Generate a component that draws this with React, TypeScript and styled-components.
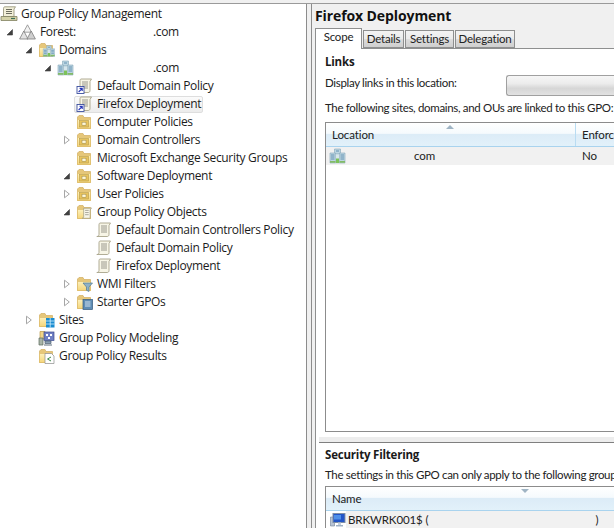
import React from "react";
import styled, { createGlobalStyle } from "styled-components";

const Global = createGlobalStyle`
  html, body { margin: 0; padding: 0; background: #f0f0f0; overflow: hidden; }
  body { font-family: "Open Sans", "Noto Sans", sans-serif; font-size: 12px; color: #1e1e1e; }
`;

const Page = styled.div`
  width: 614px; height: 528px; overflow: hidden; display: flex; flex-direction: column; background: #f0f0f0;
`;
const TopEdge = styled.div`height: 4px; flex: none; background: #f0f0f0; border-bottom: 1px solid #9a9a9a; box-sizing: border-box;`;
const Panes = styled.div`flex: 1; min-height: 0; display: flex;`;
const TreePane = styled.div`
  width: 306px; flex: none; background: #fff; border-right: 1px solid #8c8c8c; padding-top: 1px;
`;
const Gutter = styled.div`width: 4px; flex: none; background: #f0f0f0;`;
const DetailPane = styled.div`
  flex: 1; min-width: 0; background: #f0f0f0; border-left: 1px solid #8c8c8c; display: flex; flex-direction: column; padding-left: 3px;
`;
const Row = styled.div<{ $level: number }>`
  height: 18px; display: flex; align-items: center; white-space: nowrap;
  padding-left: ${(p) => (p.$level === 0 ? 0 : p.$level * 19 - 17)}px;
`;
const Expander = styled.span`width: 17px; height: 18px; flex: none; display: flex; align-items: center; padding-left: 4px; box-sizing: border-box;`;
const Item = styled.span<{ $selected?: boolean }>`
  display: flex; align-items: center; height: 17px; box-sizing: border-box; margin-left: -2px; padding: 0 1px 0 2px;
  border: 1px solid ${(p) => (p.$selected ? "#dedede" : "transparent")};
  border-radius: 2px;
  background: ${(p) => (p.$selected ? "linear-gradient(#fbfbfb, #ececec)" : "none")};
`;
const IconSlot = styled.span`width: 17px; height: 16px; flex: none; display: block; margin-left: -1px;`;
const Label = styled.span`margin-left: 4px; font-size: 12px; letter-spacing: -0.33px; color: #1c1c1c; line-height: 16px;`;
const Gap = styled.span<{ $w: number }>`display: inline-block; width: ${(p) => p.$w}px;`;

const Title = styled.div`
  height: 23px; flex: none; font-weight: 700; font-size: 14px; line-height: 24px; color: #111; letter-spacing: -0.1px;
`;
const Tabs = styled.div`display: flex; height: 21px; flex: none; align-items: flex-end; position: relative; z-index: 1;`;
const Tab = styled.div<{ $active?: boolean; $w: number }>`
  width: ${(p) => p.$w}px; height: ${(p) => (p.$active ? 21 : 18)}px; box-sizing: border-box; margin-right: 1px; text-align: center;
  border: 1px solid #8e8f8f; border-bottom: ${(p) => (p.$active ? "none" : "1px solid #8e8f8f")};
  background: ${(p) => (p.$active ? "#fff" : "linear-gradient(#f3f3f3, #ebebeb 48%, #dcdcdc 52%, #cfcfcf)")};
  font-family: "Lato", sans-serif; font-size: 11.5px; letter-spacing: -0.2px; line-height: 16px; color: #222; margin-bottom: ${(p) => (p.$active ? -1 : 0)}px;
`;
const TabBody = styled.div`
  flex: 1; min-height: 0; background: #fff; border-left: 1px solid #8e8f8f; border-top: 1px solid #8e8f8f; display: flex; flex-direction: column; overflow: hidden;
`;
const Section = styled.section<{ $h: number }>`
  height: ${(p) => p.$h}px; flex: none; padding-left: 9px; box-sizing: border-box; overflow: hidden;
`;
const Heading = styled.div<{ $top: number }>`
  margin-top: ${(p) => p.$top}px; font-weight: 700; font-size: 11.5px; letter-spacing: -0.2px; color: #1a1a1a; line-height: 16px;
`;
const Para = styled.div<{ $top?: number }>`
  margin-top: ${(p) => p.$top ?? 0}px; font-family: "Lato", sans-serif; font-size: 11.5px; letter-spacing: -0.33px; color: #222; line-height: 16px; white-space: nowrap;
`;
const LocationRow = styled.div`display: flex; align-items: flex-start; height: 21px; margin-top: 5px;`;
const Combo = styled.div`
  margin-left: auto; width: 108px; flex: none; height: 21px; border: 1px solid #a0a0a0; border-right: none; border-radius: 3px 0 0 3px;
  background: linear-gradient(#f6f6f6, #ececec 40%, #d6d6d6 65%, #e2e2e2); box-sizing: border-box;
`;
const Grid = styled.div<{ $h: number; $top: number }>`
  margin-top: ${(p) => p.$top}px; height: ${(p) => p.$h}px; border: 1px solid #8c8c8c; border-right: none; overflow: hidden; box-sizing: border-box; background: #fff;
`;
const HeadRow = styled.div`
  height: 24px; position: relative; display: flex; box-sizing: border-box; border-bottom: 1px solid #a9d3ee;
  background: linear-gradient(#ffffff, #f5fafd 45%, #dcecf7 50%, #e2f1fa);
`;
const HeadCell = styled.div<{ $w?: number }>`
  width: ${(p) => (p.$w ? `${p.$w}px` : "auto")}; flex: ${(p) => (p.$w ? "none" : 1)}; box-sizing: border-box; padding: 4px 0 0 6px; white-space: nowrap;
  font-family: "Lato", sans-serif; font-size: 11.5px; letter-spacing: -0.1px; line-height: 16px; color: #222; border-right: ${(p) => (p.$w ? "1px solid #b9dcf2" : "none")};
`;
const SortMark = styled.svg<{ $left: number }>`position: absolute; left: ${(p) => p.$left}px; top: 2px; display: block;`;
const DataRow = styled.div<{ $iconOutside?: boolean }>`
  height: 18px; display: flex; align-items: center; white-space: nowrap;
  background: ${(p) => (p.$iconOutside ? "linear-gradient(to right, #fff 20px, #f1f1f1 20px)" : "#f1f1f1")};
  font-family: "Lato", sans-serif; font-size: 11.5px; letter-spacing: -0.1px; color: #222;
`;
const DataCell = styled.div<{ $w: number; $pad: number }>`
  width: ${(p) => p.$w}px; flex: none; display: flex; align-items: center; padding-left: ${(p) => p.$pad}px; box-sizing: border-box; line-height: 14px; margin-top: -1px;
`;
const RowIcon = styled.span`width: 16px; height: 16px; display: block; flex: none; margin-top: 1px;`;
const Splitter = styled.div`
  height: 6px; flex: none; margin-left: 3px; background: #ededed; border-bottom: 1px solid #7f7f7f; box-sizing: border-box;
`;

const Arrow = ({ open }: { open?: boolean }) => (
  <svg width="8" height="10" viewBox="0 0 8 10">
    {open ? <path d="M6.5 2.5V8H1z" fill="#404040" stroke="#404040" strokeWidth=".6" /> : <path d="M1.5 1.2 6.3 5 1.5 8.8z" fill="#fff" stroke="#a6a6a6" />}
  </svg>
);

const Folder = ({ children, id }: { children?: React.ReactNode; id: string }) => (
  <svg width="17" height="16" viewBox="0 0 17 16">
    <defs>
      <linearGradient id={id} x1="0" y1="0" x2="0" y2="1">
        <stop offset="0" stopColor="#fdf1bd" />
        <stop offset="1" stopColor="#f5d67a" />
      </linearGradient>
    </defs>
    <path d="M1.5 3V14.5H14.5V3.5H8L7 1.5H3z" fill="#e6c77a" stroke="#d2ae60" strokeWidth=".7" />
    <path d="M1.5 5.5H14.5V14.5H1.5z" fill={`url(#${id})`} stroke="#dcb964" strokeWidth=".6" />
    {children}
  </svg>
);
const OU = ({ id }: { id: string }) => (
  <Folder id={id}>
    <rect x="3.5" y="6.5" width="9" height="6.5" fill="#e8c45e" stroke="#b69a4a" strokeWidth=".6" />
    <rect x="6" y="8.2" width="4" height="3" fill="#fff8d8" stroke="#98854a" strokeWidth=".5" />
  </Folder>
);
const Buildings = () => (
  <g>
    <path d="M5.5 1h6v5h-6z" fill="#bcd6e2" stroke="#84a6b8" strokeWidth=".6" />
    <path d="M1 5h5.5v10H1zM10.5 5H16v10h-5.5z" fill="#bcd6e2" stroke="#84a6b8" strokeWidth=".6" />
    <path d="M6.5 6h4v9h-4z" fill="#d6e6ec" stroke="#9ab6c4" strokeWidth=".5" />
    <path d="M2 7h3.5M2 9h3.5M2 11h3.5M11.5 7H15M11.5 9H15M11.5 11H15M7 3h3" stroke="#5b8bab" strokeWidth=".9" />
    <path d="M7 10.5h3V15H7z" fill="#7cc25a" />
    <path d="M1 13.8h5.5M10.5 13.8H16" stroke="#82bb66" strokeWidth="1.8" />
  </g>
);
const Domain = () => <svg width="17" height="16" viewBox="0 0 17 16"><Buildings /></svg>;
const DomainsFolder = () => (
  <Folder id="fd">
    <g transform="translate(4.5 3) scale(.76)"><Buildings /></g>
  </Folder>
);
const Forest = () => (
  <svg width="17" height="16" viewBox="0 0 17 16">
    <path d="M8.5 .8 12.5 8.2H4.5z" fill="#f2f2f2" stroke="#8b8b8b" strokeWidth=".8" />
    <path d="M4.8 7 9 15H.6z" fill="#e2e2e2" stroke="#7f7f7f" strokeWidth=".8" />
    <path d="M12.2 7 16.4 15H8z" fill="#cfcfcf" stroke="#7f7f7f" strokeWidth=".8" />
  </svg>
);
const Scroll = ({ link }: { link?: boolean }) => (
  <svg width="17" height="16" viewBox="0 0 17 16">
    <path d="M5 1h10.5L14 3.5v9c0 1.3-.7 2-1.8 2H1.8c1 0 2.2-.7 2.2-2V3c0-1 .4-2 1-2z" fill="#f7f5e6" stroke="#a8a48a" strokeWidth=".9" />
    <path d="M6 4h6M6 6h6M6 8h6M6 10h6" stroke="#8f8f84" strokeWidth=".9" />
    {link && (
      <>
        <rect x="1" y="8.5" width="7" height="7" fill="#fff" stroke="#3c4f9e" strokeWidth=".9" />
        <path d="M2.6 14 5.8 10.8M3.6 10.4h2.6V13" stroke="#2433b8" strokeWidth="1.1" fill="none" />
      </>
    )}
  </svg>
);
const Root = () => (
  <svg width="18" height="16" viewBox="0 0 18 16">
    <path d="M5 .8h10.5L14 3v7.5H3.5V2.5C3.5 1.5 4 .8 5 .8z" fill="#f2efd8" stroke="#8e8b70" strokeWidth=".8" />
    <path d="M6 3.5h6M6 5.5h6M6 7.5h6" stroke="#5c5c50" strokeWidth=".9" />
    <path d="M1 10.5h16v4H1z" fill="#d4d2a8" stroke="#80805f" strokeWidth=".8" />
    <path d="M11 12.5h4" stroke="#3d6e57" strokeWidth="1.2" />
  </svg>
);
const GpoFolder = () => (
  <Folder id="fg">
    <g transform="translate(5.5 3.5) scale(.72)">
      <path d="M3 1h11l-2 2v12H1c1 0 2-1 2-2z" fill="#f8f6e8" stroke="#a09c80" />
      <path d="M5 4h5M5 7h5M5 10h5" stroke="#8c8c80" />
    </g>
  </Folder>
);
const WmiFolder = () => (
  <Folder id="fw">
    <path d="M7 7h9.5L13 11v4.5l-2.5-1.2V11z" fill="#8fb2c8" stroke="#52788f" strokeWidth=".7" />
  </Folder>
);
const StarterFolder = () => (
  <Folder id="fs">
    <rect x="7" y="5.5" width="9.5" height="10" fill="#5f8db5" stroke="#34597c" strokeWidth=".7" />
    <path d="M9 8h5.5M9 10h5.5M9 12h5.5" stroke="#dfeaf4" strokeWidth=".9" />
  </Folder>
);
const SitesFolder = () => (
  <Folder id="fi">
    <rect x="8" y="6" width="8.5" height="9.5" fill="#1a8cd0" />
    <path d="M8 9h8.5M8 12h8.5M12.2 6v9.5" stroke="#d6effc" strokeWidth=".8" />
  </Folder>
);
const Modeling = () => (
  <svg width="17" height="16" viewBox="0 0 17 16">
    <path d="M2 1.5h5l1 1.5v6H2z" fill="#f2d688" stroke="#bb9a48" strokeWidth=".7" />
    <rect x="6" y="2" width="10" height="8.5" fill="#6f7fc4" stroke="#3d4a8c" strokeWidth=".7" />
    <path d="M8 4h2v2H8zM12 4h2v2h-2zM10 7h2v2h-2z" fill="#fff" />
    <path d="M1 8h4v7H1z" fill="#a8b4a8" stroke="#5d6b5d" strokeWidth=".7" />
    <path d="M7 11h6v2.5H7z" fill="#8ba0b4" stroke="#4d5f70" strokeWidth=".7" />
    <path d="M6 15h8" stroke="#5f6f7f" />
  </svg>
);
const Results = () => (
  <Folder id="fr">
    <path d="M7 5.5h6.500l2.500 2.500v7.500H7z" fill="#fff" stroke="#8d8d8d" strokeWidth=".7" />
    <path d="M13 9 9.5 11 13 13" stroke="#3f8a4a" strokeWidth="1" fill="none" />
  </Folder>
);
const Computer = () => (
  <svg width="16" height="16" viewBox="0 0 16 16">
    <path d="M.5 5h4v9h-4z" fill="#b8c4d4" stroke="#6f7f94" strokeWidth=".6" />
    <rect x="3" y="1.5" width="12" height="9" fill="#2255c8" stroke="#7f8ea4" />
    <path d="M4 3h7v4.5H4z" fill="#4f8fe8" />
    <path d="M6 13h7v1.5H6z" fill="#9fb0c4" />
    <path d="M8 10.5h3V13H8z" fill="#c3cfdc" />
  </svg>
);

type TreeNode = { level: number; icon: React.ReactNode; text: React.ReactNode; arrow?: "open" | "closed"; selected?: boolean };
const nodes: TreeNode[] = [
  { level: 0, icon: <Root />, text: "Group Policy Management" },
  { level: 1, icon: <Forest />, arrow: "open", text: <>Forest:<Gap $w={77} />.com</> },
  { level: 2, icon: <DomainsFolder />, arrow: "open", text: "Domains" },
  { level: 3, icon: <Domain />, arrow: "open", text: <><Gap $w={75} />.com</> },
  { level: 4, icon: <Scroll link />, text: "Default Domain Policy" },
  { level: 4, icon: <Scroll link />, text: "Firefox Deployment", selected: true },
  { level: 4, icon: <OU id="o1" />, text: "Computer Policies" },
  { level: 4, icon: <OU id="o2" />, arrow: "closed", text: "Domain Controllers" },
  { level: 4, icon: <OU id="o3" />, text: "Microsoft Exchange Security Groups" },
  { level: 4, icon: <OU id="o4" />, arrow: "open", text: "Software Deployment" },
  { level: 4, icon: <OU id="o5" />, arrow: "closed", text: "User Policies" },
  { level: 4, icon: <GpoFolder />, arrow: "open", text: "Group Policy Objects" },
  { level: 5, icon: <Scroll />, text: "Default Domain Controllers Policy" },
  { level: 5, icon: <Scroll />, text: "Default Domain Policy" },
  { level: 5, icon: <Scroll />, text: "Firefox Deployment" },
  { level: 4, icon: <WmiFolder />, arrow: "closed", text: "WMI Filters" },
  { level: 4, icon: <StarterFolder />, arrow: "closed", text: "Starter GPOs" },
  { level: 2, icon: <SitesFolder />, arrow: "closed", text: "Sites" },
  { level: 2, icon: <Modeling />, text: "Group Policy Modeling" },
  { level: 2, icon: <Results />, text: "Group Policy Results" },
];

export default function App() {
  return (
    <Page>
      <Global />
      <TopEdge />
      <Panes>
        <TreePane>
          {nodes.map((n, i) => (
            <Row key={i} $level={n.level}>
              {n.level > 0 && <Expander>{n.arrow && <Arrow open={n.arrow === "open"} />}</Expander>}
              <Item $selected={n.selected}>
                <IconSlot>{n.icon}</IconSlot>
                <Label>{n.text}</Label>
              </Item>
            </Row>
          ))}
        </TreePane>
        <Gutter />
        <DetailPane>
          <Title>Firefox Deployment</Title>
          <Tabs>
            <Tab $active $w={47}>Scope</Tab>
            <Tab $w={41}>Details</Tab>
            <Tab $w={49}>Settings</Tab>
            <Tab $w={60}>Delegation</Tab>
          </Tabs>
          <TabBody>
            <Section $h={388}>
              <Heading $top={5}>Links</Heading>
              <LocationRow>
                <Para>Display links in this location:</Para>
                <Combo />
              </LocationRow>
              <Para $top={4}>The following sites, domains, and OUs are linked to this GPO:</Para>
              <Grid $h={310} $top={6}>
                <HeadRow>
                  <SortMark $left={119} width="10" height="5" viewBox="0 0 10 5"><path d="M5 0 9 4H1z" fill="#9fb4c4" /></SortMark>
                  <HeadCell $w={250}>Location</HeadCell>
                  <HeadCell>Enforced</HeadCell>
                </HeadRow>
                <DataRow>
                  <DataCell $w={250} $pad={3}><RowIcon><Domain /></RowIcon><Gap $w={69} />com</DataCell>
                  <DataCell $w={60} $pad={6}>No</DataCell>
                </DataRow>
              </Grid>
            </Section>
            <Splitter />
            <Section $h={86}>
              <Heading $top={4}>Security Filtering</Heading>
              <Para $top={4}>The settings in this GPO can only apply to the following groups, users, and computers:</Para>
              <Grid $h={60} $top={3}>
                <HeadRow>
                  <SortMark $left={194} width="10" height="5" viewBox="0 0 10 5"><path d="M1 0H9L5 4z" fill="#9fb4c4" /></SortMark>
                  <HeadCell>Name</HeadCell>
                </HeadRow>
                <DataRow $iconOutside>
                  <DataCell $w={290} $pad={4}><RowIcon><Computer /></RowIcon><Gap $w={2} />BRKWRK001$ (<Gap $w={167} />)</DataCell>
                </DataRow>
              </Grid>
            </Section>
          </TabBody>
        </DetailPane>
      </Panes>
    </Page>
  );
}
